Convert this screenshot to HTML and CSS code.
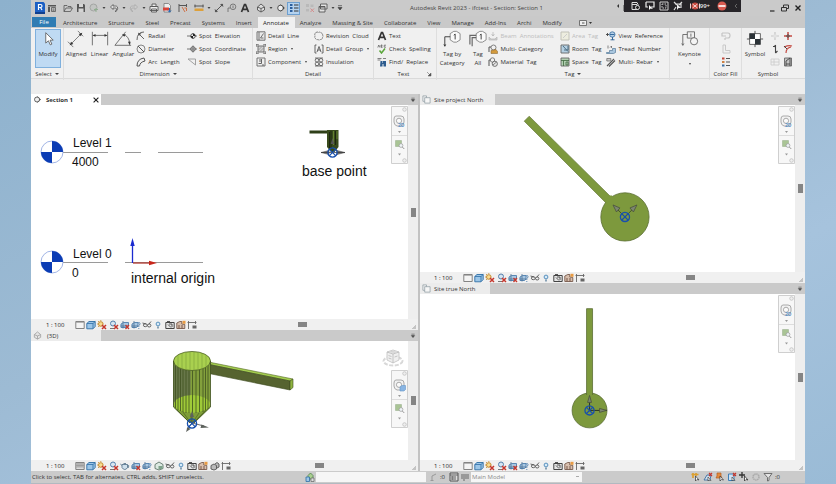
FILE: index.html
```html
<!DOCTYPE html>
<html lang="en">
<head>
<meta charset="utf-8">
<title>Autodesk Revit 2023</title>
<link rel="stylesheet" href="styles.css">
</head>
<body>
<svg class="defs" aria-hidden="true">
  <defs>
    <symbol id="home" viewBox="0 0 10 10"><path d="M1 2h8v1.500H1zM1 4h2v5H1z" fill="#555"/><path d="M4.500 4.500h4v4h-4zM5.500 6h2M5.500 7.300h2" fill="none" stroke="#555" stroke-width=".8"/></symbol>
    <symbol id="open" viewBox="0 0 10 10"><path d="M1 8.500V2.500h3l1 1h3v1.500M1 8.500l2-3.500h6.500L7.500 8.500z" fill="none" stroke="#555" stroke-width=".8"/></symbol>
    <symbol id="save" viewBox="0 0 10 10"><path d="M1 1h7l1 1v7H1z" fill="#555"/><path d="M3 1h4v3H3zM2.500 5.500h5V9h-5z" fill="#d4d4d4"/></symbol>
    <symbol id="sync" viewBox="0 0 10 10"><circle cx="4.500" cy="4.500" r="3.500" fill="#c2c4c2" stroke="#9a9d9a" stroke-width=".8"/><path d="M5 6.500h4M7 5v4" stroke="#8fae8f"/></symbol>
    <symbol id="undo" viewBox="0 0 10 10"><path d="M4 1.500L1.500 4 4 6.500V5h2.500c1.500 0 1.500 3-.5 3.500 3 0 4-5.500.5-5.500H4z" fill="#ddd" stroke="#555" stroke-width=".8"/></symbol>
    <symbol id="redo" viewBox="0 0 10 10"><path d="M6 1.500L8.500 4 6 6.500V5H3.500C2 5 2 8 4 8.500 1 8.500 0 3 3.500 3H6z" fill="#ccc" stroke="#aaa" stroke-width=".8"/></symbol>
    <symbol id="print" viewBox="0 0 10 10"><path d="M3 1h4v2.500H3zM1 3.500h8V7.500H1zM2.500 6h5v3h-5z" fill="#eee" stroke="#555" stroke-width=".9"/></symbol>
    <symbol id="pdf" viewBox="0 0 10 10"><path d="M2 .5h4.500l2 2V9H2z" fill="#eee" stroke="#777" stroke-width=".8"/><path d="M1 4.500h6v3H1z" fill="#d8443a"/><path d="M7.500 5v4M6 7.500L7.500 9.200 9 7.500" stroke="#2c6db5" fill="none"/></symbol>
    <symbol id="align" viewBox="0 0 10 10"><path d="M1 1v8M1 2.500h7.500M8.500 1v3" stroke="#555" fill="none"/><path d="M4 4l3 5M6.500 5h2v3" stroke="#cf7045" fill="none"/></symbol>
    <symbol id="measure" viewBox="0 0 10 10"><path d="M.5 3h9" stroke="#555"/><path d="M.5 5.500h9V8h-9z" fill="#dda03a"/><path d="M1 1.500v3M9 1.500v3" stroke="#555"/></symbol>
    <symbol id="dimalign" viewBox="0 0 10 10"><path d="M2 8L8 2M1 6.500L3.500 9M6.500 1L9 3.500" stroke="#555" fill="none"/><circle cx="2" cy="8" r="1.200" fill="#555"/><circle cx="8" cy="2" r="1.200" fill="#555"/></symbol>
    <symbol id="tag1" viewBox="0 0 10 10"><circle cx="6" cy="3.800" r="2.800" fill="none" stroke="#666" stroke-width=".8"/><path d="M6 2.500v2.800M3 5H1v4" stroke="#666" fill="none" stroke-width=".8"/></symbol>
    <symbol id="letter" viewBox="0 0 10 10"><path d="M1.500 9L4.500 1.500h1L8.500 9M3 6.300h4" fill="none" stroke="#333" stroke-width="1.700"/></symbol>
    <symbol id="cube" viewBox="0 0 10 10"><path d="M1.500 4L5 1l3.500 3v3L5 9 1.500 7z" fill="#ddd" stroke="#555" stroke-width=".9"/><path d="M1.500 4L5 5.500 8.500 4M5 5.500V9" stroke="#555" fill="none" stroke-width=".9"/></symbol>
    <symbol id="section" viewBox="0 0 10 10"><circle cx="4.500" cy="5" r="2.800" fill="#eee" stroke="#444" stroke-width=".9"/><path d="M4.500 1.300L8.800 5 4.500 8.700V7.800a2.800 2.800 0 0 0 0-5.600z" fill="#333"/></symbol>
    <symbol id="thin" viewBox="0 0 10 10"><path d="M1 2h2.500M1 5h2.500M1 8h2.500" stroke="#2b5e9d" stroke-width="1.800"/><path d="M5 2h4.500M5 5h4.500M5 8h4.500" stroke="#333"/></symbol>
    <symbol id="closeh" viewBox="0 0 10 10"><path d="M1 1h3v3H1zM5.500 1.500h3v2.500h-3zM1 6h3v2.500H1z" fill="#b9b9b9"/><path d="M5.500 5.500l3.500 3.500M9 5.500L5.500 9" stroke="#d48e8e"/></symbol>
    <symbol id="switch" viewBox="0 0 10 10"><path d="M2.500 1h6.500v5H2.500zM1 3.500h6V9H1z" fill="#e2e2e2" stroke="#555" stroke-width=".9"/><path d="M1 4h6" stroke="#555"/></symbol>
    <symbol id="caret" viewBox="0 0 6 10"><path d="M1.500 4h3L3 6z" fill="#444"/></symbol>
    <symbol id="caretbar" viewBox="0 0 6 10"><path d="M1 2.700h4M1 4.500h4L3 7z" fill="#444" stroke="#444" stroke-width=".7"/></symbol>

    <symbol id="radial" viewBox="0 0 10 10"><path d="M8 1Q1 1 1 9M8 8L3 3" fill="none" stroke="#555" stroke-width=".9"/><path d="M2 1.800l3.500.8L2.800 5z" fill="#555"/></symbol>
    <symbol id="diameter" viewBox="0 0 10 10"><circle cx="5" cy="5" r="4" fill="none" stroke="#777" stroke-width=".9"/><path d="M2 2l6 6" stroke="#555"/></symbol>
    <symbol id="arc" viewBox="0 0 10 10"><path d="M1 9Q1 2 8 1M3.500 9Q4 5 9 4M1 9h2.500M8 1l1 3" fill="none" stroke="#555" stroke-width="1"/></symbol>
    <symbol id="spotel" viewBox="0 0 10 10"><path d="M0 5h10M6 2v6" stroke="#555" stroke-width=".8"/><circle cx="6" cy="5" r="2.300" fill="#eee" stroke="#333" stroke-width=".8"/><path d="M6 5V2.700A2.300 2.300 0 0 1 8.300 5zM6 5v2.300A2.300 2.300 0 0 1 3.700 5z" fill="#222"/></symbol>
    <symbol id="spotco" viewBox="0 0 10 10"><path d="M0 5h10M6 1.500v7" stroke="#555" stroke-width=".8"/><circle cx="6" cy="5" r="2.300" fill="none" stroke="#555" stroke-width=".9"/></symbol>
    <symbol id="slope" viewBox="0 0 10 10"><path d="M1 2h7.500v6z" fill="none" stroke="#999" stroke-width=".9"/></symbol>
    <symbol id="detline" viewBox="0 0 10 10"><path d="M1 .8h8v8.400H1z" fill="#e8e8e8" stroke="#666" stroke-width=".9"/><path d="M3 1v8M7.500 2.500L4.500 7M4.500 7h3" fill="none" stroke="#555" stroke-width=".8"/></symbol>
    <symbol id="region" viewBox="0 0 10 10"><path d="M2 2h6v6H2z" fill="#d4d4d4" stroke="#555" stroke-width=".8"/><path d="M.8 0v3M0 .8h3M9.200 0v3M7 .8h3M.8 7v3M0 9.200h3M9.200 7v3M7 9.200h3" stroke="#555" stroke-width=".7"/><path d="M2.500 6l3.500-3.500M4 7.500L7.500 4" stroke="#888" stroke-width=".7"/></symbol>
    <symbol id="compo" viewBox="0 0 10 10"><path d="M1 1h8v8H1z" fill="#eee" stroke="#666" stroke-width=".9"/><path d="M5.500 2v4.500h-3M4 2v3M6 8h2" fill="none" stroke="#555" stroke-width=".9"/></symbol>
    <symbol id="cloud" viewBox="0 0 10 10"><path d="M2 1.500q1.500-1 2.500 0 1.500-1 2.500.5 2 0 1.500 2 1 1.500 0 2.500 0 2-2 2-1 1-2.500 0-2 .5-2.500-1Q0 6.500 1.200 5 0 2.500 2 1.500z" fill="none" stroke="#666" stroke-width=".8" stroke-dasharray="2 .5"/></symbol>
    <symbol id="dgroup" viewBox="0 0 10 10"><path d="M2.500 1H1v8h1.500M7.500 1H9v8H7.500M3 8l2-5.500L7 8M3.700 6h2.600" fill="none" stroke="#555" stroke-width=".9"/></symbol>
    <symbol id="insul" viewBox="0 0 10 10"><path d="M1 1h8M1 9h8" stroke="#555" stroke-width=".8"/><circle cx="3" cy="3.300" r="1.800" fill="none" stroke="#555" stroke-width=".8"/><circle cx="7" cy="3.300" r="1.800" fill="none" stroke="#555" stroke-width=".8"/><circle cx="3" cy="6.900" r="1.800" fill="none" stroke="#555" stroke-width=".8"/><circle cx="7" cy="6.900" r="1.800" fill="none" stroke="#555" stroke-width=".8"/></symbol>
    <symbol id="spell" viewBox="0 0 10 10"><path d="M.8 3.500l1-2.500 1 2.500M4 1v2.300h1.300L4.500 2.200 5.200 1H4M9 1.200H7.200v2H9" fill="none" stroke="#555" stroke-width=".7"/><path d="M2.500 6.500L4.500 9 8 4.500" fill="none" stroke="#5aa63a" stroke-width="1.500"/></symbol>
    <symbol id="find" viewBox="0 0 10 10"><path d="M.5 1.500h4M.5 3h3M6 1.500h3" stroke="#666" stroke-width=".8"/><path d="M3.500 4h2v2H6V4h3v5.500H6.500V7H5.500v2.500H3z" fill="#2d5c8e"/></symbol>
    <symbol id="beam" viewBox="0 0 10 10"><path d="M5 1v4M3.500 3.500L5 5l1.500-1.500M1 6l2 2h4l2-2v3H1z" fill="#ccc" stroke="#bbb" stroke-width=".8"/></symbol>
    <symbol id="multi" viewBox="0 0 10 10"><circle cx="5.500" cy="3.500" r="2.500" fill="none" stroke="#666" stroke-width=".8"/><path d="M3 3H1v5" fill="none" stroke="#555"/><path d="M3 6.500l5-1 1.500 2V9.500H3z" fill="#d39a3c" stroke="#7d5a2a" stroke-width=".5"/></symbol>
    <symbol id="material" viewBox="0 0 10 10"><circle cx="4.500" cy="3" r="2.200" fill="none" stroke="#666" stroke-width=".8"/><path d="M2.200 3H1v6" fill="none" stroke="#555"/><circle cx="6.800" cy="6.800" r="2.600" fill="#e8e8e8" stroke="#555" stroke-width=".8"/><path d="M5 8l3.500-3" stroke="#555" stroke-width=".7"/></symbol>
    <symbol id="area" viewBox="0 0 10 10"><path d="M1 1h8v8H1z" fill="#ededdf" stroke="#c2c2b8"/><path d="M3 7l4-4" stroke="#ccc"/></symbol>
    <symbol id="room" viewBox="0 0 10 10"><path d="M1 1v8h8V1z" fill="#b4cfe2" stroke="#666" stroke-width=".9"/><path d="M3 2l5 5.500M8 2v4H4" fill="none" stroke="#44657b" stroke-width=".9"/></symbol>
    <symbol id="space" viewBox="0 0 10 10"><path d="M1 1h8v8H1z" fill="#b1d0b1" stroke="#666" stroke-width=".9"/><path d="M1 3.500h8M3.500 3.500V9M6 5h2v3H6z" fill="none" stroke="#3f663f" stroke-width=".8"/></symbol>
    <symbol id="viewref" viewBox="0 0 10 10"><path d="M0 3.500h3M1.500 2v3" stroke="#444" stroke-width=".9"/><circle cx="6.300" cy="3.500" r="2.700" fill="#b5d0e8" stroke="#356a9c" stroke-width=".8"/><path d="M4 3.500h4.500M6.500 6v3M4.500 8.800h4" stroke="#356a9c"/></symbol>
    <symbol id="tread" viewBox="0 0 10 10"><path d="M.5 8.500h3v-2h3v-2h3v4l-2 1h-7z" fill="#a9c6de" stroke="#557a99" stroke-width=".7"/><path d="M2 1.500v3M4 3.500l1.500-1.500v2" stroke="#555" fill="none" stroke-width=".7"/></symbol>
    <symbol id="rebar" viewBox="0 0 10 10"><path d="M1 9L8 2M3 9.500L9 3.500" stroke="#555" stroke-width="1.100"/><path d="M.8 1.500h4v2.500h-4z" fill="#ccc" stroke="#666" stroke-width=".7"/></symbol>
    <symbol id="duct" viewBox="0 0 10 10"><path d="M1 2h6q2 0 2 2.500T7 7H4M1 2v3h4M4 7v2" fill="none" stroke="#c4c4c4" stroke-width="1.200"/></symbol>
    <symbol id="pipe" viewBox="0 0 10 10"><path d="M2 1v8h7V6.500H4.500V1z" fill="none" stroke="#c8c8c8" stroke-width="1"/></symbol>
    <symbol id="legend" viewBox="0 0 10 10"><path d="M1 .5h2.500v2H1z" fill="#c3483b"/><path d="M1 4h2.500v2H1z" fill="#ce8142"/><path d="M1 7.500h2.500v2H1z" fill="#3c6ea4"/><path d="M5 1.500h4M5 5h4M5 8.500h4" stroke="#555"/></symbol>
    <symbol id="crossoff" viewBox="0 0 10 10"><path d="M1 5h8M5 1v8" stroke="#c6c6c6" stroke-width="1.200"/><path d="M3.500 3.500h3v3h-3z" fill="#e2e2e2"/></symbol>
    <symbol id="crossred" viewBox="0 0 10 10"><path d="M1 5h8M5 1v8" stroke="#c44a42" stroke-width="1.500"/><path d="M3 5h4M5 3v4" stroke="#555"/></symbol>
    <symbol id="span" viewBox="0 0 10 10"><path d="M5.500 1v8M3 2.500h2.500M5.500 9l2-2M5.500 1L4 3" fill="none" stroke="#444" stroke-width="1.100"/></symbol>
    <symbol id="path" viewBox="0 0 10 10"><path d="M1 3Q6 1 9 2M3 9Q3 4 8 3" fill="none" stroke="#c44a42" stroke-width="1.200"/><path d="M1 2l3 3" stroke="#444"/></symbol>
    <symbol id="areap" viewBox="0 0 10 10"><path d="M1 2h8v6H1zM1 5h8M4 2v6" fill="none" stroke="#cdcdcd" stroke-width=".9"/></symbol>
    <symbol id="stair" viewBox="0 0 10 10"><path d="M1.500 1h7v8h-7z" fill="#c4c4c4" stroke="#666" stroke-width=".9"/><path d="M3 9V4l4-3v8M3 7h4" stroke="#444" stroke-width=".9" fill="none"/></symbol>

    <symbol id="detail" viewBox="0 0 10 10"><path d="M.8 1.500h8.400v7H.8z" fill="#f4f4f4" stroke="#777" stroke-width=".9"/><path d="M1 2.500h8" stroke="#999" stroke-width=".7"/></symbol>
    <symbol id="detailfine" viewBox="0 0 10 10"><path d="M.8 1.500h8.400v7H.8z" fill="#ddd" stroke="#777" stroke-width=".9"/><path d="M1 3h8M1 4.500h8M1 6h8M3 2v4M5 2v4M7 2v4" stroke="#888" stroke-width=".6"/></symbol>
    <symbol id="style" viewBox="0 0 10 10"><path d="M.8 3.500L3 1.500h6.200v5L7 8.800H.8z" fill="#9cc6e8" stroke="#2f6ea6" stroke-width=".9"/><path d="M.8 3.500H7v5M7 3.500l2.200-2" fill="none" stroke="#2f6ea6" stroke-width=".8"/></symbol>
    <symbol id="sun" viewBox="0 0 10 10"><circle cx="3.800" cy="4" r="2.300" fill="#f6dc92" stroke="#c68b2e"/><path d="M3.800 0v1M0 4h1M1 7l1-1M1 1l1 1" stroke="#c68b2e" stroke-width=".8"/><path d="M5 5l4 4M9 5L5 9" stroke="#c5362c" stroke-width="1.500"/></symbol>
    <symbol id="shadow" viewBox="0 0 10 10"><circle cx="4" cy="3.500" r="2.500" fill="#d6e5f2" stroke="#5480ad"/><path d="M1 8.500h4" stroke="#777"/><path d="M5 5l4 4M9 5L5 9" stroke="#c5362c" stroke-width="1.500"/></symbol>
    <symbol id="teapot" viewBox="0 0 10 10"><path d="M2 3.500h5.500v3q-1 2-2.700 2T2 6.500zM2 4.500L.3 3M7.500 4q2 0 1 2.500H7.500M3.500 2.500h2.500" fill="#cfe0ec" stroke="#5d7990" stroke-width=".9"/></symbol>
    <symbol id="crop" viewBox="0 0 10 10"><path d="M1 4l2.500-1.500H8.500V6L6.500 7.500H1z" fill="#a9c8e3" stroke="#4d7eae" stroke-width=".9"/><path d="M3 1v7.500M.5 6h8" stroke="#4d6f92" stroke-width=".8"/><path d="M5.500 5l3.500 4M9 5L5.500 9" stroke="#c5362c" stroke-width="1.300"/></symbol>
    <symbol id="cropshow" viewBox="0 0 10 10"><path d="M1 4l2.500-1.500H7V6L5.500 7.500H1z" fill="#a9c8e3" stroke="#4d7eae" stroke-width=".9"/><path d="M3 1v7.500M.5 6H7" stroke="#4d6f92" stroke-width=".8"/><path d="M7 3q2-1 2 .5T7.800 5.500V7M7.800 8v1" fill="none" stroke="#4d7eae" stroke-width=".9"/></symbol>
    <symbol id="lock3d" viewBox="0 0 10 10"><path d="M1 3.500L5 1l4 2.500v4L5 9 1 7.500z" fill="#dce9e2" stroke="#5d7569" stroke-width=".9"/><path d="M4.500 5h4v3h-4z" fill="#7da28a"/></symbol>
    <symbol id="glasses" viewBox="0 0 10 10"><path d="M.5 3l3.500 1M9 1.500L7 4" stroke="#555" stroke-width=".9"/><ellipse cx="3.300" cy="5.200" rx="1.900" ry="1.500" fill="none" stroke="#555" stroke-width=".9"/><ellipse cx="7.200" cy="5.500" rx="1.700" ry="1.500" fill="none" stroke="#555" stroke-width=".9"/></symbol>
    <symbol id="bulb" viewBox="0 0 10 10"><circle cx="5" cy="4" r="1.900" fill="#d8ebf8" stroke="#4b87b8" stroke-width=".9"/><path d="M4.300 6.500h1.400v2H4.300z" fill="#5b7f9c"/></symbol>
    <symbol id="camera" viewBox="0 0 10 10"><path d="M.8 2.500h8.400v6H.8z" fill="#e5e5e5" stroke="#444" stroke-width="1"/><path d="M2 1.500h3M3 4.500l3 3M4 4h3v3" stroke="#444" fill="none" stroke-width=".9"/></symbol>
    <symbol id="analytic" viewBox="0 0 10 10"><path d="M.8 8.500V3l3-1.500h2V4l3 .5v4z" fill="#d8bfae" stroke="#77594b" stroke-width=".9"/><path d="M3 8.500V5M6 8.500V5" stroke="#77594b"/><path d="M6.500.8h3v3h-3z" fill="#e89b43"/></symbol>
    <symbol id="displace" viewBox="0 0 10 10"><path d="M1 4.500l3-1.500 2.500 1.500V8L4 9 1 8zM5 3l2-1.500L9 3v3l-2 1" fill="#bbb" stroke="#555" stroke-width=".9"/></symbol>
    <symbol id="constraint" viewBox="0 0 10 10"><path d="M.5 2.500h9M1.500 1v8M8.500 1v3" stroke="#666" fill="none" stroke-width=".9"/><path d="M5.500 5.500h4v3h-4z" fill="#666"/></symbol>

    <symbol id="sheet" viewBox="0 0 10 10"><path d="M1 1h4v2M1 1v6h2M3 3h6v6H3z" fill="#f6f6f6" stroke="#8d9aa2" stroke-width=".8"/></symbol>
    <symbol id="origin" viewBox="-6 -6 12 12"><circle r="4.600" fill="none" stroke="#174fae" stroke-width="1.300"/><path d="M-3.300-3.300L3.300 3.300M3.300-3.300L-3.300 3.300" stroke="#174fae" stroke-width="1.200"/></symbol>
    <symbol id="level" viewBox="-12 -12 24 24"><circle r="11" fill="#fff" stroke="#8aa2de" stroke-width=".8"/><path d="M0 0V-11A11 11 0 0 1 11 0zM0 0V11A11 11 0 0 1-11 0z" fill="#0b3cb4"/></symbol>
    <symbol id="navbar" viewBox="0 0 17 58">
      <path d="M.5.500h16v57H.5z" fill="#f7f7f7" stroke="#cfcfcf"/><path d="M1 29.500h15" stroke="#ddd"/>
      <circle cx="13.500" cy="3.500" r="1.800" fill="#eee" stroke="#bbb" stroke-width=".7"/><circle cx="13.500" cy="54.500" r="1.800" fill="#eee" stroke="#bbb" stroke-width=".7"/>
      <path d="M5 10h5q3 0 3 3v3q0 3-3 4H6q-3-1-3-4v-3q0-3 2-3z" fill="#f2f2f2" stroke="#aaa"/><circle cx="8" cy="14.800" r="2.600" fill="#fafafa" stroke="#aaa"/>
      <path d="M7 25h3l-1.500 2zM7 47.500h3L8.500 49.500z" fill="#999"/>
      <path d="M4.500 34.500h6v6h-6z" fill="#a9c495" stroke="#95aa88" stroke-width=".5"/><circle cx="10" cy="39.500" r="1.900" fill="#eef3f6" stroke="#999" stroke-width=".7"/><path d="M11.300 41l2 2" stroke="#999"/>
    </symbol>
  </defs>
</svg>

<div class="app">
  <header class="titlebar">
    <div class="quick">
      <button class="logo" aria-label="File menu"><svg viewBox="0 0 10 12"><path d="M0 0h8.500L10 1.500V11H0z" fill="#1c5fc4"/><path d="M0 10h10v2H0z" fill="#103f8e"/><path d="M3.500 8V2.500h2q1.500 0 1.500 1.500T5.500 5.500h-2M5.500 5.500L7 8" fill="none" stroke="#fff" stroke-width="1.200"/></svg></button>
      <button aria-label="Home"><svg><use href="#home"/></svg></button><i class="sep"></i>
      <button aria-label="Open"><svg><use href="#open"/></svg></button>
      <button aria-label="Save"><svg><use href="#save"/></svg></button>
      <button aria-label="Synchronize"><svg><use href="#sync"/></svg></button>
      <button class="drop" aria-label="Synchronize options"><svg><use href="#caret"/></svg></button>
      <button aria-label="Undo"><svg><use href="#undo"/></svg></button>
      <button class="drop" aria-label="Undo list"><svg><use href="#caret"/></svg></button>
      <button aria-label="Redo"><svg><use href="#redo"/></svg></button>
      <button class="drop" aria-label="Redo list"><svg><use href="#caret"/></svg></button>
      <button aria-label="Print"><svg><use href="#print"/></svg></button>
      <button aria-label="Export PDF"><svg><use href="#pdf"/></svg></button><i class="sep"></i>
      <button aria-label="Activate dimensions"><svg><use href="#align"/></svg></button><i class="sep"></i>
      <button aria-label="Measure"><svg><use href="#measure"/></svg></button>
      <button class="drop" aria-label="Measure options"><svg><use href="#caret"/></svg></button>
      <button aria-label="Aligned dimension"><svg><use href="#dimalign"/></svg></button>
      <button aria-label="Tag"><svg><use href="#tag1"/></svg></button>
      <button aria-label="Text"><svg><use href="#letter"/></svg></button><i class="sep"></i>
      <button aria-label="3D view"><svg><use href="#cube"/></svg></button>
      <button class="drop" aria-label="3D view options"><svg><use href="#caret"/></svg></button>
      <button aria-label="Section"><svg><use href="#section"/></svg></button>
      <button class="on" aria-label="Thin lines"><svg><use href="#thin"/></svg></button><i class="sep"></i>
      <button aria-label="Close inactive"><svg><use href="#closeh"/></svg></button>
      <button aria-label="Switch windows"><svg><use href="#switch"/></svg></button>
      <button class="drop" aria-label="Window list"><svg><use href="#caret"/></svg></button>
      <button class="drop" aria-label="Customize"><svg><use href="#caretbar"/></svg></button>
    </div>
    <div class="doc-title">Autodesk Revit 2023 - ifctest - Section: Section 1</div>
    <div class="window-tools">
      <button aria-label="Minimize"><svg viewBox="0 0 10 10"><path d="M3 8h4.500" stroke="#333" stroke-width="1.300"/></svg></button>
      <button aria-label="Restore"><svg viewBox="0 0 10 10"><path d="M3.500 4V2h5v3.500H7M1.500 4.500h5V8h-5z" fill="none" stroke="#333" stroke-width="1"/></svg></button>
      <button aria-label="Close"><svg viewBox="0 0 10 10"><path d="M2.500 2.500l5 5M7.500 2.500l-5 5" stroke="#222" stroke-width="1.400"/></svg></button>
    </div>
    <div class="share-wrap">
      <svg class="share-arrow" viewBox="0 0 8 10"><path d="M1 5l2-2v4z" fill="#333"/><path d="M7.500 4v6" stroke="#888"/></svg>
      <div class="share">
        <svg viewBox="0 0 10 10"><path d="M1 1.500h5l1 2v5H1zM1 3.500h5" fill="none" stroke="#ddd"/><circle cx="6.500" cy="6.500" r="2" fill="#222" stroke="#ddd"/></svg>
        <svg viewBox="0 0 10 10"><path d="M1 1h8v5H6M1 1v5h2" fill="none" stroke="#eee" stroke-width="1.200"/><path d="M4 4v5l1.500-1.500L8 8z" fill="#fff"/></svg>
        <svg viewBox="0 0 10 10"><path d="M1 1h8v8H1z" fill="none" stroke="#ccc"/><path d="M3 3h4v4H3z" fill="none" stroke="#ccc" stroke-dasharray="1.500 1"/></svg>
        <svg viewBox="0 0 10 10"><path d="M1 1l3 3M9 1L6 4M1 9l2-3M2 3h6v4" fill="none" stroke="#ddd" stroke-width="1.200"/><path d="M4 3v6l1.500-2H8z" fill="#eee"/></svg>
        <span class="live"><svg viewBox="0 0 10 10"><circle cx="5" cy="5" r="3.500" fill="#c94a40"/><path d="M2.500 3l5 4M7.500 3l-5 4M.5 2.500v5M9.500 2.500v5" stroke="#f2d6d2" stroke-width="1"/></svg>99+</span>
        <svg viewBox="0 0 10 10"><circle cx="5" cy="5" r="4.500" fill="#d75a50"/><path d="M1.500 5h7" stroke="#fff" stroke-width="1.600"/></svg>
        <svg viewBox="0 0 10 10"><path d="M6 3L4 5l2 2" fill="none" stroke="#666"/></svg>
      </div>
    </div>
  </header>

  <nav class="tabs">
    <button class="file">File</button>
    <button>Architecture</button><button>Structure</button><button>Steel</button><button>Precast</button><button>Systems</button><button>Insert</button><button class="active">Annotate</button><button>Analyze</button><button>Massing &amp; Site</button><button>Collaborate</button><button>View</button><button>Manage</button><button>Add-Ins</button><button>Archi</button><button>Modify</button>
    <button class="panel-toggle" aria-label="Panel display"><svg viewBox="0 0 14 8"><path d="M.5 1.500h7v5h-7z" fill="#eee" stroke="#666" stroke-width=".9"/><path d="M3 4h2.500" stroke="#555"/><path d="M10 3h3l-1.500 2z" fill="#333"/></svg></button>
  </nav>

  <section class="ribbon">
    <div class="group select">
      <div class="tools"><button class="big pressed"><svg viewBox="0 0 20 20"><path d="M7.500 3v11.500l3-2.500 2 4.500 1.800-.8-2-4.400h3.500z" fill="#fff" stroke="#555" stroke-width=".9"/></svg>Modify</button></div>
      <button class="caption">Select <b></b></button>
    </div>
    <div class="group dimension">
      <div class="tools">
        <button class="big"><svg viewBox="0 0 20 20"><path d="M4 16L16 4M1 13l6 6M12 1l6 6" stroke="#666" fill="none" stroke-width=".9"/><path d="M3 17l1.500-4 2.500 2.500zM17 3l-1.500 4L13 4.500z" fill="#333"/></svg>Aligned</button>
        <button class="big"><svg viewBox="0 0 20 20"><path d="M1.500 2v15M18.500 2v15M2 6h16" stroke="#666" fill="none"/><path d="M2 6l3-1.500v3zM18 6l-3-1.500v3z" fill="#333"/></svg>Linear</button>
        <button class="big"><svg viewBox="0 0 20 20"><path d="M13 2L1 17h18M9.500 5Q17 6 17.500 16" stroke="#666" fill="none"/><path d="M9 5.300l4-.8-1.500 3zM17.500 17l-2-4h3z" fill="#333"/></svg>Angular</button>
        <div class="stack"><button><svg><use href="#radial"/></svg>Radial</button><button><svg><use href="#diameter"/></svg>Diameter</button><button><svg><use href="#arc"/></svg>Arc&nbsp; Length</button></div>
        <div class="stack"><button><svg><use href="#spotel"/></svg>Spot&nbsp; Elevation</button><button><svg><use href="#spotco"/></svg>Spot&nbsp; Coordinate</button><button><svg><use href="#slope"/></svg>Spot&nbsp; Slope</button></div>
      </div>
      <button class="caption">Dimension <b></b></button>
    </div>
    <div class="group detail">
      <div class="tools">
        <div class="stack"><button><svg><use href="#detline"/></svg>Detail&nbsp; Line</button><button><svg><use href="#region"/></svg>Region <b></b></button><button><svg><use href="#compo"/></svg>Component <b></b></button></div>
        <div class="stack"><button><svg><use href="#cloud"/></svg>Revision&nbsp; Cloud</button><button><svg><use href="#dgroup"/></svg>Detail&nbsp; Group <b></b></button><button><svg><use href="#insul"/></svg>Insulation</button></div>
      </div>
      <div class="caption">Detail</div>
    </div>
    <div class="group text">
      <div class="tools">
        <div class="stack"><button><svg><use href="#letter"/></svg>Text</button><button><svg><use href="#spell"/></svg>Check&nbsp; Spelling</button><button><svg><use href="#find"/></svg>Find/&nbsp; Replace</button></div>
      </div>
      <div class="caption launch"><span>Text</span><svg viewBox="0 0 6 6"><path d="M1 1l3 3M5 2v3H2z" fill="#555" stroke="#555" stroke-width=".5"/></svg></div>
    </div>
    <div class="group tag">
      <div class="tools">
        <button class="big"><svg viewBox="0 0 20 20"><path d="M8 4l4-2.500h3L19 4v7l-4 2.500h-3L8 11z" fill="#fafafa" stroke="#777" stroke-width=".9"/><path d="M8 7.500H2V18M1 16l1 2 1-2M12 5.800L13.500 4.500V10.500" stroke="#333" fill="none"/></svg>Tag by Category</button>
        <button class="big"><svg viewBox="0 0 20 20"><path d="M8 4l4-2.500h3L19 4v7l-4 2.500h-3L8 11z" fill="#fafafa" stroke="#777" stroke-width=".9"/><path d="M8 6H1v10M8 8.500H3.500V18" stroke="#666" fill="none" stroke-width="1.300"/><path d="M12 5.800L13.500 4.500V10.500" stroke="#333" fill="none"/></svg>Tag<br>All</button>
        <div class="stack"><button disabled><svg><use href="#beam"/></svg>Beam&nbsp; Annotations</button><button><svg><use href="#multi"/></svg>Multi- Category</button><button><svg><use href="#material"/></svg>Material&nbsp; Tag</button></div>
        <div class="stack"><button disabled><svg><use href="#area"/></svg>Area&nbsp; Tag</button><button><svg><use href="#room"/></svg>Room&nbsp; Tag</button><button><svg><use href="#space"/></svg>Space&nbsp; Tag</button></div>
        <div class="stack"><button><svg><use href="#viewref"/></svg>View&nbsp; Reference</button><button><svg><use href="#tread"/></svg>Tread&nbsp; Number</button><button><svg><use href="#rebar"/></svg>Multi- Rebar <b></b></button></div>
      </div>
      <button class="caption">Tag <b></b></button>
    </div>
    <div class="group keynote">
      <div class="tools"><button class="big"><svg viewBox="0 0 20 20"><path d="M7 2h8v7H7zM7 5H2v12M.8 15L2 17l1.200-2M11 4v3.500" fill="none" stroke="#666"/><circle cx="14.500" cy="12.500" r="4" fill="#f4f4f4" stroke="#666"/></svg>Keynote<b></b></button></div>
    </div>
    <div class="group fill">
      <div class="tools"><div class="stack icons"><button aria-label="Duct legend"><svg><use href="#duct"/></svg></button><button aria-label="Pipe legend"><svg><use href="#pipe"/></svg></button><button aria-label="Color fill legend"><svg><use href="#legend"/></svg></button></div></div>
      <div class="caption">Color Fill</div>
    </div>
    <div class="group symbol">
      <div class="tools">
        <button class="big"><svg viewBox="0 0 20 20"><path d="M10 1v18M1 10h18" stroke="#333" stroke-width=".9"/><path d="M4 4h12v12H4z" fill="#fff" stroke="#333" stroke-width=".8"/><path d="M4 4h6v6H4zM10 10h6v6h-6z" fill="#2c3338"/></svg>Symbol</button>
        <div class="stack icons"><button aria-label="Span direction"><svg><use href="#crossoff"/></svg></button><button aria-label="Beam symbol"><svg><use href="#span"/></svg></button><button aria-label="Area symbol"><svg><use href="#areap"/></svg></button></div>
        <div class="stack icons"><button aria-label="Area reinforcement"><svg><use href="#crossred"/></svg></button><button aria-label="Path reinforcement"><svg><use href="#path"/></svg></button><button aria-label="Stair path"><svg><use href="#stair"/></svg></button></div>
      </div>
      <div class="caption">Symbol</div>
    </div>
  </section>

  <main class="workspace">
    <div class="column left">
      <section class="pane pane-section">
        <header class="pane-head"><div class="pane-tab current"><svg><use href="#section"/></svg><span>Section 1</span><button aria-label="Close Section 1"><svg viewBox="0 0 10 10"><path d="M2 2l6 6M8 2L2 8" stroke="#222" stroke-width="1.400"/></svg></button></div><button class="pane-menu" aria-label="View list"><svg><use href="#caretbar"/></svg></button></header>
        <div class="pane-body">
          <div class="canvas">
            <svg class="drawing" viewBox="0 0 377 214">
              <path d="M32 47.500h45M94 47.500h16M127 47.500h45M32 157.500h45M94 157.500h78" stroke="#8e8e8e" stroke-width=".9"/>
              <use href="#level" x="9" y="35" width="24" height="24"/><use href="#level" x="9" y="145" width="24" height="24"/>
              <g class="note"><text x="42" y="42">Level 1</text><text x="41" y="61">4000</text><text x="42" y="153">Level 0</text><text x="41" y="172">0</text></g>
              <path d="M101.500 158v-20" stroke="#1b2bd0" stroke-width="1.300"/><path d="M101.500 133l2.200 8h-4.400z" fill="#1b2bd0"/>
              <path d="M102 158h17" stroke="#b03a30" stroke-width="1.300"/><path d="M126 158l-8 2.200v-4.400z" fill="#c8261b"/>
              <g class="note large"><text x="100" y="178">internal origin</text><text x="271" y="71">base point</text></g>
              <path d="M278.500 25.500h18V28.500h-18z" fill="#2f3f18"/><path d="M296 25h11.500v17l-4 5h-3.500l-4-5z" fill="#384a1c"/><path d="M298.500 27v16M300 26v17M304.500 26v14" stroke="#1d260f"/><path d="M302.500 26v14M306 26v8" stroke="#63812d"/>
              <path d="M301.500 33l1.800 6h-3.600z" fill="#555"/><path d="M290 47.500l8-2v4zM314 47.500l-8-2v4z" fill="#777" stroke="#444" stroke-width=".5"/><path d="M290 47.500h24" stroke="#333" stroke-width=".7"/>
              <use href="#origin" x="295.500" y="41.500" width="12" height="12"/>
            </svg>
            <svg class="nav"><use href="#navbar"/><text x="7" y="21">2D</text></svg>
          </div>
          <div class="vscroll"><i></i></div>
        </div>
        <footer class="pane-foot"><span class="scale">1 : 100</span><div class="view-icons"><svg><use href="#detail"/></svg><svg><use href="#style"/></svg><svg><use href="#sun"/></svg><svg><use href="#shadow"/></svg><svg><use href="#crop"/></svg><svg><use href="#cropshow"/></svg><svg><use href="#glasses"/></svg><svg><use href="#bulb"/></svg><svg><use href="#camera"/></svg><svg><use href="#analytic"/></svg><svg><use href="#constraint"/></svg></div><div class="hscroll"><i></i></div><b class="grip"></b></footer>
      </section>

      <section class="pane pane-3d">
        <header class="pane-head"><div class="pane-tab faded"><svg><use href="#cube"/></svg><span>(3D)</span></div><button class="pane-menu" aria-label="View list"><svg><use href="#caretbar"/></svg></button></header>
        <div class="pane-body">
          <div class="canvas">
            <svg class="drawing" viewBox="0 0 377 119">
              <path d="M178 23.500l2-2 82 16.500-3 2z" fill="#a4cd51" stroke="#53661f" stroke-width=".6"/><path d="M178 23.500l81 16.500v9L178 32.500z" fill="#566330" stroke="#3d4a1e" stroke-width=".6"/><path d="M259 40l3-2v8.500l-3 2.500z" fill="#8fb43f" stroke="#3d4a1e" stroke-width=".6"/>
              <path d="M142.500 20v46L159 82h4l16.500-16V20z" fill="#83a03c"/>
              <path d="M142.500 20v44h17V28z" fill="#68774a"/>
              <ellipse cx="161" cy="63" rx="18" ry="9" fill="#9fca38"/>
              <path d="M142.500 66q18 12 37 0L163 82h-4z" fill="#7e9d38"/>
              <path d="M144.500 20v47M147 22v47M149.500 24v46M152 25v46M155 26v46M158 27v45M161.500 28v44M165 28v44M168.500 27v44M172 26v45M174.500 25v44M177 23v45" stroke="#3f5120" stroke-width=".8"/>
              <path d="M146 69l12 12M152 71l7 10M160 73v8M168 72l-6 9M175 69l-12 12" stroke="#48601d" stroke-width=".6"/>
              <ellipse cx="161" cy="20" rx="18.500" ry="9.500" fill="#a9d04f" stroke="#4b5e25" stroke-width=".8"/><path d="M147 14v12M151 12v16M155 11v18M159 11v18M163 11v18M167 11v18M171 12v16M175 14v12" stroke="#7e9f3b" stroke-width=".6"/>
              <path d="M142.500 20v46L159 82M179.500 20v46L163 82" fill="none" stroke="#3f5120" stroke-width=".8"/>
              <path d="M161 82V74M161 82l12 3M161 82l-5 6" stroke="#444" stroke-width=".8"/><path d="M161 70l2 6h-4zM178 86.500l-8.500.5 1-3.500zM155 91l1.500-5 3 2z" fill="#5d625d"/>
              <use href="#origin" x="155" y="76.500" width="12" height="12"/>
            </svg>
            <svg class="viewcube" viewBox="0 0 22 18"><ellipse cx="11" cy="12" rx="9.500" ry="4.500" fill="none" stroke="#d8d8d8" stroke-width="2" stroke-dasharray="4 1.500"/><path d="M5 3l6-2 6 2v8l-6 3-6-3z" fill="#efefef" stroke="#c0c0c0" stroke-width=".8"/><path d="M5 3l6 2 6-2M11 5v9M6.500 6.500l3 1M12.500 8l3-1M6.500 9l3 1M8.500 2.800l5 .3" fill="none" stroke="#b9b9b9" stroke-width=".8"/></svg>
            <svg class="nav lower"><use href="#navbar"/><path d="M9 17l2-1.500h3.500v4L13 21H9z" fill="#89b5e3" stroke="#6597ca" stroke-width=".6"/></svg>
          </div>
          <div class="vscroll"><i></i></div>
        </div>
        <footer class="pane-foot"><span class="scale">1 : 100</span><div class="view-icons wide"><svg><use href="#detailfine"/></svg><svg><use href="#style"/></svg><svg><use href="#sun"/></svg><svg><use href="#shadow"/></svg><svg><use href="#teapot"/></svg><svg><use href="#crop"/></svg><svg><use href="#cropshow"/></svg><svg><use href="#lock3d"/></svg><svg><use href="#glasses"/></svg><svg><use href="#bulb"/></svg><svg><use href="#camera"/></svg><svg><use href="#analytic"/></svg><svg><use href="#displace"/></svg><svg><use href="#constraint"/></svg></div><div class="hscroll"><i></i></div><b class="grip"></b></footer>
      </section>
    </div>

    <div class="column right">
      <section class="pane pane-project">
        <header class="pane-head"><div class="pane-tab"><svg><use href="#sheet"/></svg><span>Site project North</span></div><button class="pane-menu" aria-label="View list"><svg><use href="#caretbar"/></svg></button></header>
        <div class="pane-body">
          <div class="canvas">
            <svg class="drawing" viewBox="0 0 376 167">
              <circle cx="205.500" cy="112" r="24.200" fill="#7d993d" stroke="#5c6e35" stroke-width=".8"/><path d="M104.500 16l5-5L191.500 92l-5.500 5.500z" fill="#7d993d" stroke="#66783a" stroke-width=".7"/><path d="M185.500 96l6-6 8 8-6 6z" fill="#7d993d"/>
              <path d="M205.500 112l-11-11M205.500 112l11-11" stroke="#3e4a2a" stroke-width=".9"/><path d="M193.500 100l7 3-3.500 4zM217.500 100l-7 3 3.500 4z" fill="#7c8670" stroke="#49523c" stroke-width=".8"/>
              <use href="#origin" x="199.500" y="106" width="12" height="12"/>
            </svg>
            <svg class="nav"><use href="#navbar"/><text x="7" y="21">2D</text></svg>
          </div>
          <div class="vscroll"><i></i></div>
        </div>
        <footer class="pane-foot"><span class="scale">1 : 100</span><div class="view-icons"><svg><use href="#detail"/></svg><svg><use href="#style"/></svg><svg><use href="#sun"/></svg><svg><use href="#shadow"/></svg><svg><use href="#crop"/></svg><svg><use href="#cropshow"/></svg><svg><use href="#glasses"/></svg><svg><use href="#bulb"/></svg><svg><use href="#camera"/></svg><svg><use href="#analytic"/></svg><svg><use href="#constraint"/></svg></div><div class="hscroll"><i></i></div><b class="grip"></b></footer>
      </section>

      <section class="pane pane-true">
        <header class="pane-head"><div class="pane-tab"><svg><use href="#sheet"/></svg><span>Site true North</span></div><button class="pane-menu" aria-label="View list"><svg><use href="#caretbar"/></svg></button></header>
        <div class="pane-body">
          <div class="canvas">
            <svg class="drawing" viewBox="0 0 376 166">
              <circle cx="170" cy="116.500" r="17.500" fill="#7d993d" stroke="#5c6e35" stroke-width=".8"/><path d="M167 101V14.500h6V101" fill="#7d993d" stroke="#5c6e35" stroke-width=".8"/>
              <path d="M170 116.500V108M170 116.500h17.500" stroke="#2c3520"/><path d="M170 101.500l2 7h-4zM187 116.500l-7-2v4z" fill="#7c8670" stroke="#49523c" stroke-width=".8"/>
              <use href="#origin" x="164" y="110.500" width="12" height="12"/>
            </svg>
            <svg class="nav"><use href="#navbar"/><text x="7" y="21">2D</text></svg>
          </div>
          <div class="vscroll"><i></i></div>
        </div>
        <footer class="pane-foot"><span class="scale">1 : 100</span><div class="view-icons"><svg><use href="#detail"/></svg><svg><use href="#style"/></svg><svg><use href="#sun"/></svg><svg><use href="#shadow"/></svg><svg><use href="#crop"/></svg><svg><use href="#cropshow"/></svg><svg><use href="#glasses"/></svg><svg><use href="#bulb"/></svg><svg><use href="#camera"/></svg><svg><use href="#analytic"/></svg><svg><use href="#constraint"/></svg></div><div class="hscroll"><i></i></div><b class="grip"></b></footer>
      </section>
    </div>
  </main>

  <footer class="status">
    <span class="hint">Click to select, TAB for alternates, CTRL adds, SHIFT unselects.</span>
    <div class="worksets">
      <svg viewBox="0 0 10 10"><path d="M3 3.500L5.500 1 8 3.500V7H3z" fill="#a9cf8f" stroke="#4d7f4a" stroke-width=".8"/><path d="M1 5h3.500v4.500H1z" fill="#9cc6e8" stroke="#2f6ea6" stroke-width=".8"/><path d="M6 6h3v3.500H6z" fill="#ddd" stroke="#666" stroke-width=".7"/></svg>
      <input type="text" aria-label="Active workset">
      <svg viewBox="0 0 10 10"><path d="M3 9V4l4-2M1.500 8.500h3" fill="none" stroke="#999"/></svg>
      <span>:0</span>
      <svg viewBox="0 0 10 10"><path d="M1 1h8v8H1z" fill="#ddd" stroke="#555"/><path d="M1 3h8M3 5h4M3 7h4M3 4v4" stroke="#555" stroke-width=".9"/></svg>
      <svg viewBox="0 0 10 10"><path d="M1 2h8v5H5v2H3V7H1z" fill="#999"/></svg>
      <select aria-label="Design option"><option>Main Model</option></select>
    </div>
    <div class="selection">
      <svg viewBox="0 0 10 10"><path d="M.5 2.500h7M2 1v5M5 1v3" stroke="#dba032" stroke-width="1.700"/><path d="M4.500 4v5l1.500-1.500L8 8z" fill="#fff" stroke="#333" stroke-width=".7"/></svg>
      <svg viewBox="0 0 10 10"><path d="M1 8l3-5h4L7 8z" fill="#cfe0ef" stroke="#3d6fa3" stroke-width=".9"/><path d="M6 1l3 3M9 1L6 4" stroke="#c5362c" stroke-width="1.200"/><path d="M5 5v4l1-1 2 .5z" fill="#fff" stroke="#333" stroke-width=".6"/></svg>
      <svg viewBox="0 0 10 10"><path d="M2 1h4v3l1 2H1l1-2z" fill="#e58a3c" stroke="#b25f22" stroke-width=".7"/><path d="M5 4v5l1.500-1.500L8.500 8z" fill="#fff" stroke="#333" stroke-width=".7"/></svg>
      <svg viewBox="0 0 10 10"><path d="M1.500 2H7v6.500H1.500z" fill="#cfe2f2" stroke="#3d7fb8"/><path d="M6 1l3 3M9 1L6 4" stroke="#c5362c" stroke-width="1.200"/><path d="M5 5v4l1-1 2 .5z" fill="#fff" stroke="#333" stroke-width=".6"/></svg>
      <svg viewBox="0 0 10 10"><path d="M3 0v6M0 3h6" stroke="#333" stroke-width="1.300"/><path d="M5.500 4v5L7 7.500 9 8z" fill="#fff" stroke="#333" stroke-width=".8"/></svg>
      <svg viewBox="0 0 10 10"><circle cx="5" cy="5" r="3" fill="none" stroke="#aaa" stroke-width="1.500" stroke-dasharray="1.500 .5"/></svg>
      <svg viewBox="0 0 10 10"><path d="M1 1.500h8L6 5.500V8.500L4.500 9V5.500z" fill="#e4e4e4" stroke="#555" stroke-width=".8"/></svg>
      <span>:0</span>
    </div>
  </footer>
</div>
</body>
</html>
```

FILE: styles.css
```css
* { box-sizing: border-box; }

body {
  margin: 0;
  min-height: 100vh;
  padding: 0 31px;
  display: flex;
  background: linear-gradient(155deg, #8db1cd 0%, #9dbbd4 45%, #a6c3dd 70%, #9abbd6 100%);
  font: 6px/8px "Open Sans", "Noto Sans", sans-serif;
  color: #333;
}

button, input, select {
  margin: 0;
  padding: 0;
  border: 0;
  background: none;
  font: inherit;
  color: inherit;
}

svg { display: block; width: 10px; height: 10px; flex: none; }
.defs { position: absolute; width: 0; height: 0; }

.app {
  flex: 1;
  min-width: 0;
  display: flex;
  flex-direction: column;
  background: #c9c9c9;
}

/* Title bar */
.titlebar {
  position: relative;
  height: 16px;
  display: flex;
  align-items: center;
  background: #cacaca;
}
.quick { display: flex; align-items: center; padding-left: 3px; }
.quick button { width: 13px; height: 13px; display: flex; align-items: center; justify-content: center; }
.quick .logo { width: 11px; }
.quick .logo svg { height: 12px; }
.quick .drop { width: 7px; }
.quick .drop svg { width: 6px; }
.quick .on { background: #b4d2ef; border: 1px solid #6d9fd0; }
.quick .sep { width: 3px; }
.doc-title { flex: 1; padding-left: 67px; white-space: nowrap; color: #444; }
.window-tools { display: flex; gap: 3px; padding-right: 2px; }
.window-tools button { width: 10px; height: 10px; }
.share-wrap {
  position: absolute;
  top: 0;
  right: 64px;
  height: 12px;
  display: flex;
  align-items: center;
}
.share-arrow { width: 8px; }
.share {
  height: 12px;
  padding-left: 7px;
  display: flex;
  align-items: center;
  gap: 4px;
  background: #262428;
  color: #eee;
}
.share .live { display: flex; align-items: center; padding: 0 3px; font-weight: 600; }

/* Ribbon tabs */
.tabs { height: 12px; display: flex; align-items: stretch; padding: 1px 0 0 1px; }
.tabs button { padding: 0 6px 0 5px; white-space: nowrap; }
.tabs .file { width: 24px; margin: 0 2px 1px 0; padding: 0; background: #2f7cb3; color: #fff; }
.tabs .active { background: #f0f0f0; color: #222; }
.tabs .panel-toggle { padding: 1px 11px; }
.tabs .panel-toggle svg { width: 14px; height: 8px; }

/* Ribbon */
.ribbon {
  height: 66px;
  padding-bottom: 14px;
  display: grid;
  grid-template-columns: 33fr 189fr 121fr 63fr 233fr 40fr 32fr 63fr;
  background: linear-gradient(#f0f0f0 50px, #dadada 50px, #dadada 51px, #ededed 51px);
}
.group { min-width: 0; display: flex; flex-direction: column; border-right: 1px solid #dedede; }
.group:last-child { border-right: 0; }
.tools { height: 40px; padding-top: 1px; display: grid; }
.caption { height: 12px; display: flex; justify-content: center; align-items: center; gap: 3px; white-space: nowrap; }
.ribbon .tag .caption { padding-left: 40px; }
.ribbon .symbol .caption { padding-right: 11px; }
.launch span { flex: 1; padding-left: 22px; text-align: center; }
.launch svg { width: 6px; height: 6px; margin: 0 4px 0 12px; }
b { font-weight: 400; }
.ribbon b { width: 0; height: 0; border: 2px solid transparent; border-top: 2px solid #444; border-bottom: 0; }
.stack b { margin-left: 2px; }
.ribbon .stack b { border-width: 2px 1px 0; }
.ribbon .keynote b { margin-top: 2px; border-width: 2px 1px 0; }

.big {
  min-width: 0;
  display: flex;
  flex-direction: column;
  align-items: center;
  padding-top: 1px;
  gap: 2px;
  line-height: 9px;
}
.big svg { width: 18px; height: 18px; }
.pressed { margin: 0 2px 0 4px; padding-top: 0; background: #bfdaf3; border: 1px solid #7fb0dd; }
.stack { display: grid; grid-template-rows: repeat(3, 13px); }
.stack button { display: flex; align-items: center; gap: 2px; white-space: nowrap; }
.stack button:disabled { color: #bcbcbc; }
.icons button { justify-content: center; }
.dimension .tools { grid-template-columns: 24fr 22fr 25fr 50fr 64fr; }
.detail .tools { grid-template-columns: 57fr 58fr; padding-left: 3px; }
.text .tools { padding-left: 3px; }
.tag .tools { grid-template-columns: 30fr 21fr 71fr 46fr 62fr; }
.symbol .tools { grid-template-columns: 26fr 13fr 13fr; padding-right: 11px; }

/* Views */
.workspace {
  flex: 1;
  display: grid;
  grid-template-columns: 387fr 385fr;
  gap: 2px;
  background: #c2c2c2;
}
.column { min-width: 0; display: flex; flex-direction: column; }
.pane { min-height: 0; display: flex; flex-direction: column; }
.pane-section { flex: 236 1 0; }
.pane-3d { flex: 141 1 0; }
.pane-project { flex: 189 1 0; }
.pane-true { flex: 188 1 0; }
.pane-head { height: 11px; display: flex; justify-content: space-between; background: #cacaca; }
.pane-tab { display: flex; align-items: center; gap: 3px; min-width: 70px; padding: 0 12px 0 2px; background: #ececec; white-space: nowrap; }
.pane-tab > svg { width: 9px; height: 9px; }
.pane-tab.current { padding-right: 1px; background: #fff; font-weight: 700; }
.pane-tab.current span { flex: 1; padding-left: 1px; }
.pane-tab.faded > svg { opacity: .5; }
.pane-tab.faded span { padding-left: 2px; }
.pane-tab button svg { width: 8px; height: 8px; }
.pane-menu svg { width: 10px; height: 8px; }
.pane-body { flex: 1; min-height: 0; display: flex; }
.canvas { position: relative; flex: 1; min-width: 0; background: #fff; }
.drawing { position: absolute; inset: 0; width: 100%; height: 100%; }
.note { font: 12px "Liberation Sans", Arial, sans-serif; fill: #111; }
.note.large { font-size: 14px; }
.nav { position: absolute; top: 1px; right: 0; width: 17px; height: 58px; }
.nav.lower { top: 29px; }
.nav text { font: bold 5px "Open Sans", sans-serif; fill: #5f94c4; }
.viewcube { position: absolute; top: 8px; right: 4px; width: 22px; height: 18px; }
.vscroll { width: 10px; display: flex; align-items: center; justify-content: center; background: #eee; }
.vscroll i { width: 5px; height: 9px; background: #858585; }
.pane-foot { height: 11px; display: flex; align-items: center; padding-left: 15px; background: #f0f0f0; }
.right .pane-foot { padding-left: 14px; }
.scale { width: 29px; white-space: nowrap; color: #222; }
.view-icons { width: 122px; display: flex; justify-content: space-between; }
.view-icons.wide { width: 156px; }
.hscroll { flex: 1; display: flex; justify-content: center; }
.hscroll i { width: 9px; height: 5px; background: #858585; }
.grip { width: 4px; height: 4px; margin: 4px 2px 0 4px; background: linear-gradient(135deg, transparent 50%, #c4c4c4 50%); }

/* Status bar */
.status {
  height: 13px;
  padding: 0 26px 0 1px;
  display: grid;
  grid-template-columns: 273fr 277fr 197fr;
  align-items: center;
  background: #cbcbcb;
  border-bottom: 1px solid #b2b9c0;
}
.hint { white-space: nowrap; }
.worksets, .selection { display: flex; align-items: center; }
.worksets { gap: 1px; }
.worksets span { width: 8px; }
.worksets input, .worksets select { flex: 1; min-width: 0; height: 10px; background: #f6f6f6; }
.worksets select { appearance: none; padding-left: 1px; color: #8c8c8c; background: linear-gradient(#aaa, #aaa) calc(100% - 3px) 4px / 3px 1px no-repeat #f6f6f6; }
.worksets input { margin-right: 2px; }
.selection { justify-content: flex-end; gap: 2px; }
.selection span { width: 4px; }
```
